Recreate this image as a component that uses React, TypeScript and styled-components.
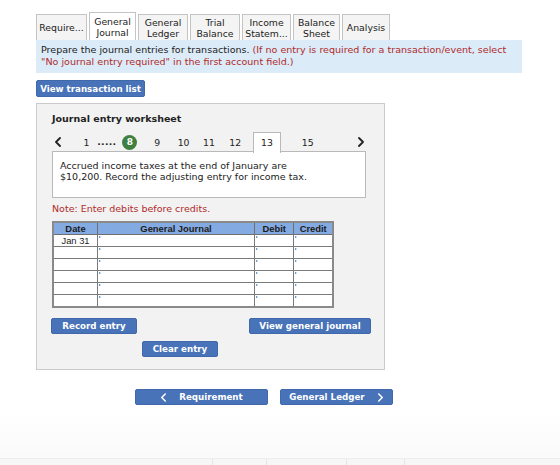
import styled, { createGlobalStyle } from "styled-components";

const GlobalStyle = createGlobalStyle`
  html, body {
    margin: 0;
    padding: 0;
    background: #ffffff;
    font-family: "DejaVu Sans", Verdana, sans-serif;
    color: #222;
  }
`;

// === Page shell ===
const Page = styled.div`
  position: relative;
  width: 560px;
  height: 465px;
  overflow: hidden;
  background: linear-gradient(#ffffff 0, #ffffff 410px, #fafafa 459px);
`;

const Content = styled.div`
  padding: 12px 0 0 36px;
  width: 486px;
`;

// === Tabs ===
const Tabs = styled.div`
  display: flex;
  align-items: flex-end;
  gap: 2px;
  height: 28px;
`;

const Tab = styled.div<{ $w: number; $active?: boolean }>`
  box-sizing: border-box;
  width: ${(p) => p.$w}px;
  height: ${(p) => (p.$active ? 28 : 26)}px;
  border: 1px solid #c4c4c4;
  border-bottom: none;
  background: ${(p) => (p.$active ? "#ffffff" : "#f4f4f4")};
  display: flex;
  align-items: center;
  justify-content: center;
  text-align: center;
  font-size: 9.3px;
  line-height: 11px;
  white-space: nowrap;
  color: #222;
`;

// === Instructions ===
const Info = styled.div`
  background: #dcebf8;
  height: 33px;
  box-sizing: border-box;
  padding: 4px 5px;
  font-size: 9.55px;
  line-height: 12px;
  white-space: nowrap;
`;

const Red = styled.span`
  color: #b02a2a;
`;

const BlueButton = styled.button<{ $w: number }>`
  box-sizing: border-box;
  width: ${(p) => p.$w}px;
  height: 16px;
  padding: 0;
  border: 1px solid #3f69ab;
  border-radius: 2px;
  background: #4873b8;
  color: #fff;
  font-family: "DejaVu Sans", Verdana, sans-serif;
  font-weight: bold;
  font-size: 8.7px;
  white-space: nowrap;
  display: flex;
  align-items: center;
  justify-content: center;
  gap: 12px;
`;

const TopButton = styled(BlueButton)`
  margin-top: 7px;
  height: 17px;
`;

// === Worksheet panel ===
const Panel = styled.div`
  box-sizing: border-box;
  margin-top: 6px;
  width: 349px;
  height: 267px;
  background: #f2f2f2;
  border: 1px solid #cbcbcb;
  padding: 9px 18px 0 15px;
`;

const Title = styled.div`
  font-weight: bold;
  font-size: 9.5px;
  line-height: 12px;
`;

const Pager = styled.div`
  display: flex;
  align-items: flex-start;
  height: 20px;
  margin-top: 7px;
  position: relative;
  z-index: 1;
`;

const Slot = styled.div<{ $w: number; $ml?: number }>`
  width: ${(p) => p.$w}px;
  margin-left: ${(p) => p.$ml ?? 0}px;
  height: 20px;
  display: flex;
  align-items: center;
  justify-content: center;
  font-size: 9.3px;
  white-space: nowrap;
  color: #222;
`;

const ActivePage = styled(Slot)`
  box-sizing: border-box;
  background: #fff;
  border: 1px solid #b9b9b9;
  border-bottom: none;
  height: 21px;
  padding-bottom: 1px;
`;

const Dots = styled(Slot)`
  letter-spacing: 0.3px;
  font-weight: bold;
  padding-bottom: 2px;
  box-sizing: border-box;
`;

const Badge = styled.div`
  width: 15px;
  height: 15px;
  border-radius: 50%;
  background: #3f8040;
  color: #fff;
  font-weight: bold;
  font-size: 9px;
  display: flex;
  align-items: center;
  justify-content: center;
`;

const Description = styled.div`
  box-sizing: border-box;
  width: 314px;
  height: 47px;
  margin-top: -1px;
  background: #fff;
  border: 1px solid #b9b9b9;
  padding: 8px 7px;
  font-size: 9.5px;
  line-height: 11px;
  white-space: nowrap;
`;

const Note = styled.div`
  color: #b02a2a;
  font-size: 9.5px;
  margin-top: 6px;
  line-height: 10px;
`;

// === Journal table ===
const Table = styled.table`
  margin-top: 7px;
  border-collapse: collapse;
  width: 282px;
  font-family: "Liberation Sans", Arial, sans-serif;
  font-size: 9.4px;
  border: 2px solid #8a8a8a;
`;

const Th = styled.th<{ $w: number }>`
  width: ${(p) => p.$w}px;
  height: 11px;
  padding: 0;
  background: #84aae2;
  border: 1px solid #6f6f6f;
  font-weight: bold;
  color: #1b1b1b;
  line-height: 11px;
`;

const Td = styled.td<{ $input?: boolean }>`
  position: relative;
  height: 11px;
  padding: 0;
  background: #fff;
  border: 1px solid #7a7a7a;
  text-align: center;
  line-height: 11px;
  color: #222;

  &::before {
    content: "";
    display: ${(p) => (p.$input ? "block" : "none")};
    position: absolute;
    left: 1px;
    top: 1px;
    width: 0;
    height: 0;
    border-top: 1.5px solid transparent;
    border-bottom: 1.5px solid transparent;
    border-left: 2.5px solid #3c78c8;
  }
`;

const ButtonRow = styled.div`
  display: flex;
  justify-content: space-between;
  width: 320px;
  margin: 10px 0 0 -1px;
`;

const CenterRow = styled.div`
  margin: 7px 0 0 90px;
`;

// === Bottom navigation ===
const NavRow = styled.div`
  display: flex;
  gap: 12px;
  margin: 19px 0 0 99px;
`;

const Footer = styled.div`
  position: absolute;
  left: 0;
  right: 0;
  bottom: 0;
  height: 6px;
  border-top: 1px solid #ededed;
  background: #f6f6f6;
  display: flex;
`;

const FooterCell = styled.div<{ $w: number }>`
  width: ${(p) => p.$w}px;
  border-right: 1px solid #e6e6e6;
`;

function Chevron({ dir, size = 8, color = "#222", weight = 1.8 }: { dir: "left" | "right"; size?: number; color?: string; weight?: number }) {
  const pts = dir === "left" ? "6,1 2,5 6,9" : "2,1 6,5 2,9";
  return (
    <svg width={size} height={size + 2} viewBox="0 0 8 10">
      <polyline points={pts} fill="none" stroke={color} strokeWidth={weight} strokeLinecap="round" strokeLinejoin="round" />
    </svg>
  );
}

const rows = ["Jan 31", "", "", "", "", ""];

export default function App() {
  return (
    <Page>
      <GlobalStyle />
      <Content>
        <Tabs>
          <Tab $w={51}>Require...</Tab>
          <Tab $w={47} $active>
            General
            <br />
            Journal
          </Tab>
          <Tab $w={50}>
            General
            <br />
            Ledger
          </Tab>
          <Tab $w={50}>
            Trial
            <br />
            Balance
          </Tab>
          <Tab $w={49}>
            Income
            <br />
            Statem...
          </Tab>
          <Tab $w={47}>
            Balance
            <br />
            Sheet
          </Tab>
          <Tab $w={48}>Analysis</Tab>
        </Tabs>

        <Info>
          Prepare the journal entries for transactions.{" "}
          <Red>(If no entry is required for a transaction/event, select</Red>
          <br />
          <Red>"No journal entry required" in the first account field.)</Red>
        </Info>

        <TopButton $w={109}>View transaction list</TopButton>

        <Panel>
          <Title>Journal entry worksheet</Title>

          <Pager>
            <Slot $w={10} $ml={1}>
              <Chevron dir="left" />
            </Slot>
            <Slot $w={12} $ml={18}>1</Slot>
            <Dots $w={22} $ml={4}>.....</Dots>
            <Slot $w={15} $ml={5}>
              <Badge>8</Badge>
            </Slot>
            <Slot $w={16} $ml={12}>9</Slot>
            <Slot $w={18} $ml={10}>10</Slot>
            <Slot $w={18} $ml={8}>11</Slot>
            <Slot $w={18} $ml={9}>12</Slot>
            <ActivePage $w={29} $ml={9}>13</ActivePage>
            <Slot $w={18} $ml={18}>15</Slot>
            <Slot $w={10} $ml={40}>
              <Chevron dir="right" />
            </Slot>
          </Pager>

          <Description>
            Accrued income taxes at the end of January are
            <br />
            $10,200. Record the adjusting entry for income tax.
          </Description>

          <Note>Note: Enter debits before credits.</Note>

          <Table>
            <thead>
              <tr>
                <Th $w={44}>Date</Th>
                <Th $w={161}>General Journal</Th>
                <Th $w={39}>Debit</Th>
                <Th $w={38}>Credit</Th>
              </tr>
            </thead>
            <tbody>
              {rows.map((d, i) => (
                <tr key={i}>
                  <Td>{d}</Td>
                  <Td $input />
                  <Td $input />
                  <Td $input />
                </tr>
              ))}
            </tbody>
          </Table>

          <ButtonRow>
            <BlueButton $w={86}>Record entry</BlueButton>
            <BlueButton $w={122}>View general journal</BlueButton>
          </ButtonRow>
          <CenterRow>
            <BlueButton $w={76}>Clear entry</BlueButton>
          </CenterRow>
        </Panel>

        <NavRow>
          <BlueButton $w={133}>
            <Chevron dir="left" color="#fff" size={7} />
            Requirement
          </BlueButton>
          <BlueButton $w={113}>
            General Ledger
            <Chevron dir="right" color="#fff" size={7} />
          </BlueButton>
        </NavRow>
      </Content>

      <Footer>
        <FooterCell $w={212} />
        <FooterCell $w={53} />
        <FooterCell $w={79} />
        <FooterCell $w={57} />
      </Footer>
    </Page>
  );
}
